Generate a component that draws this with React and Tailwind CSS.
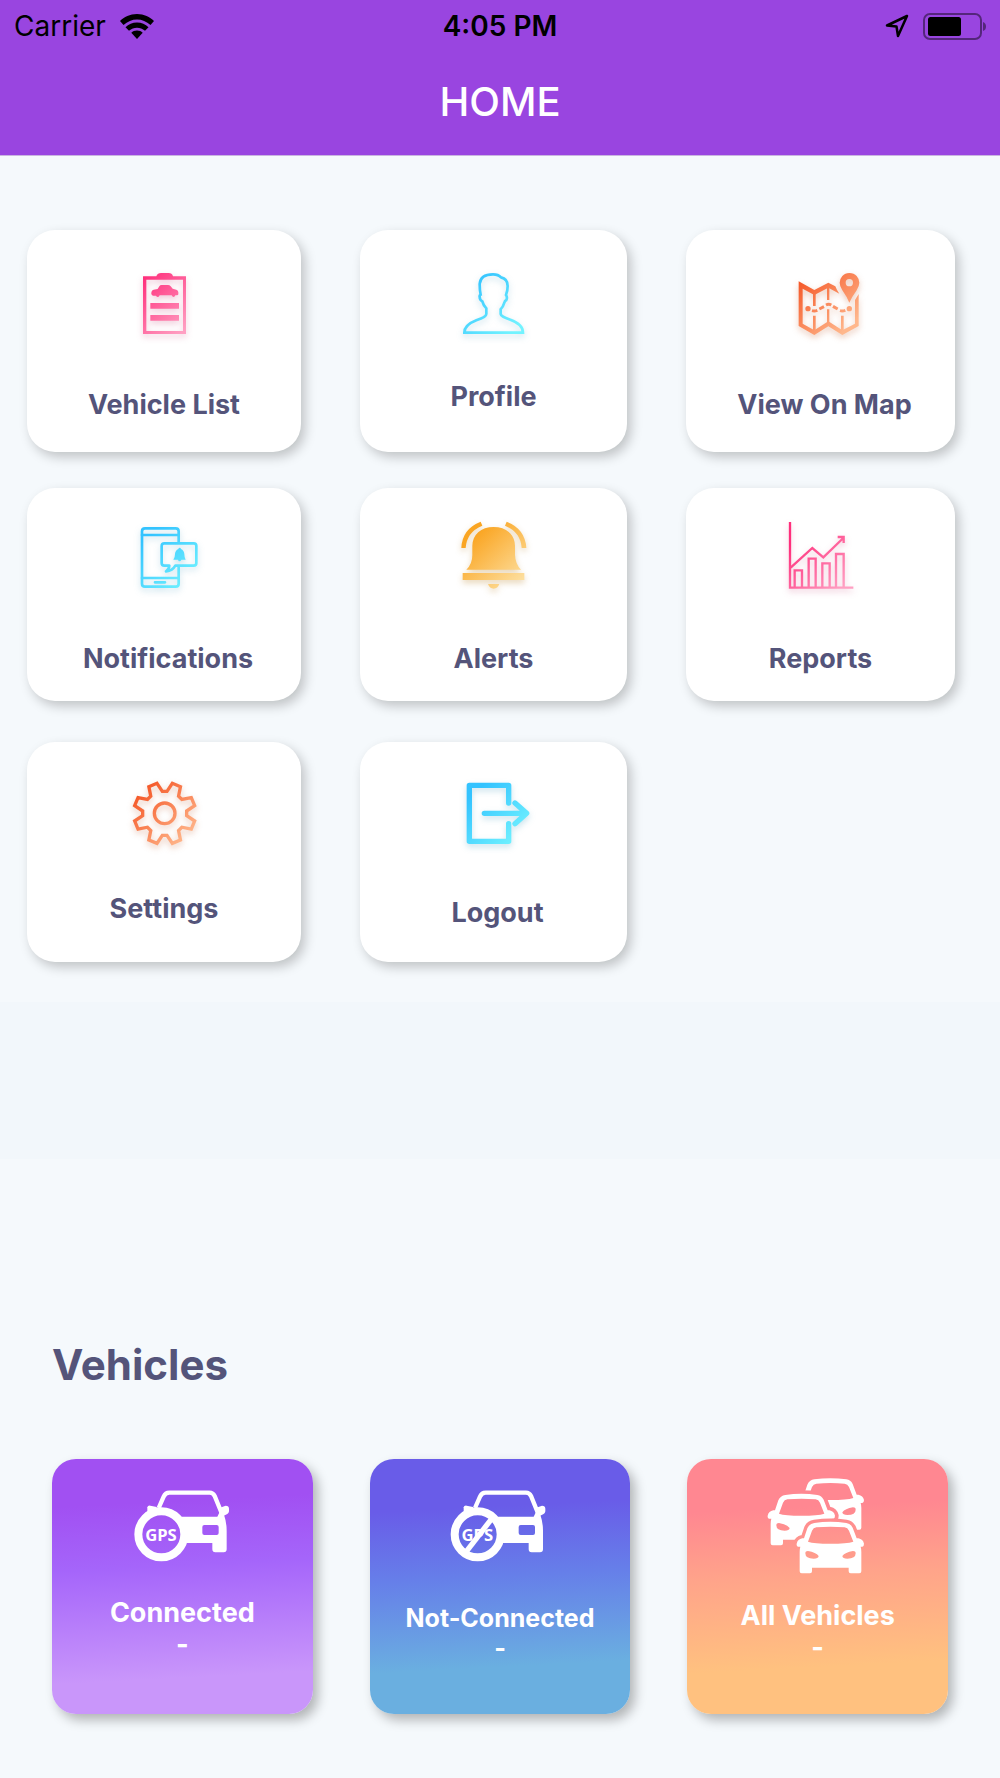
import React from "react";

const PALETTES = {
  pink: { from: "#ff2f7c", to: "#ff9fc2", shadow: "drop-shadow-[0_3px_3px_rgba(190,40,100,0.25)]" },
  cyan: { from: "#33c3ff", to: "#72f3ff", shadow: "drop-shadow-[0_3px_3px_rgba(40,140,180,0.25)]" },
  orange: { from: "#f55a2a", to: "#ffb78c", shadow: "drop-shadow-[0_3px_3px_rgba(190,80,30,0.3)]" },
  amber: { from: "#faa522", to: "#fddf9f", shadow: "drop-shadow-[0_3px_3px_rgba(180,120,20,0.3)]" },
};

function GradientIcon({ name, tone, x, y, children }) {
  const palette = PALETTES[tone];
  const id = `tone-${name}`;
  const paint = `url(#${id})`;
  return (
    <svg
      viewBox={`${x} ${y} 240 240`}
      className={`size-20 overflow-visible ${palette.shadow}`}
      aria-hidden="true"
    >
      <defs>
        <linearGradient id={id} gradientUnits="userSpaceOnUse" x1={x + 50} y1={y + 50} x2={x + 185} y2={y + 195}>
          <stop offset="0" stopColor={palette.from} />
          <stop offset="1" stopColor={palette.to} />
        </linearGradient>
      </defs>
      {children(paint)}
    </svg>
  );
}

function VehicleListIcon() {
  return (
    <GradientIcon name="list" tone="pink" x={312} y={132}>
      {(p) => (
        <g fill={p}>
          <path fillRule="evenodd" d="M369 169H409Q413 159 423 159H446Q456 159 459 169H498V342H369ZM379 179V333H489V179Z" />
          <path d="M394 222Q393 211 401 209L413 207L418 199Q420 195 425 195H444Q449 195 452 199L458 206L469 209Q475 211 475 217V223Q475 226 471 226H466Q464 231 461 231Q457 231 455 226H419Q417 231 414 231Q410 231 408 227H399Q395 226 394 222Z" />
          <path d="M391 249H477V266H391ZM391 285H477V302H391Z" />
        </g>
      )}
    </GradientIcon>
  );
}

function ProfileIcon() {
  return (
    <GradientIcon name="profile" tone="cyan" x={311} y={132}>
      {(p) => (
        <path
          fill="none"
          stroke={p}
          strokeWidth="8"
          d="M342 338C342 318 360 308 378 301Q408 291 408 282V265Q399 256 396 244Q388 240 388 230Q387 226 391 224Q388 210 388 192Q390 163 428 163Q444 163 452 172Q472 176 472 198Q472 212 467 225Q472 232 468 240Q463 243 462 248Q458 262 451 268V282Q452 290 480 299C505 308 518 320 518 338Z"
        />
      )}
    </GradientIcon>
  );
}

function MapIcon() {
  return (
    <GradientIcon name="map" tone="orange" x={343} y={132}>
      {(p) => (
        <g fill={p}>
          <path d="M384 184L431 210L473 188L494 199Q499 212 506 221L473 203L431 225L396 206V311L431 331L473 304L515 331L553 311V240L564 222V318L515 345L473 319L431 345L384 318Z" />
          <path d="M427 218H435V258H427ZM427 287H435V332H427ZM469 200H476V240H469ZM469 268H476V308H469ZM511 287H519V332H511Z" />
          <path
            fillRule="evenodd"
            d="M536 159Q550 159 558 168Q566 177 566 188Q566 197 558 211Q543 232 536 248Q529 231 515 211Q507 198 507 188Q507 177 515 168Q523 159 536 159ZM536 177A11 11 0 1 0 536 199A11 11 0 1 0 536 177Z"
          />
          <circle cx="412" cy="266" r="8" />
          <circle cx="536" cy="266" r="8" />
          <g fill="none" stroke={p} strokeWidth="9">
            <path d="M424 272Q432 274 440 271" />
            <path d="M446 267L460 260" />
            <path d="M466 255Q474 251 482 255" />
            <path d="M487 259L501 267" />
            <path d="M508 272Q516 274 524 271" />
          </g>
        </g>
      )}
    </GradientIcon>
  );
}

function NotificationsIcon() {
  return (
    <GradientIcon name="notifications" tone="cyan" x={324} y={126}>
      {(p) => (
        <g fill="none" stroke={p} strokeWidth="8" strokeLinejoin="round" strokeLinecap="round">
          <path d="M476 186V154Q476 145 467 145H375Q366 145 366 154V311Q366 320 375 320H467Q476 320 476 311V262" />
          <path d="M366 165H476M366 294H476M405 307H435" />
          <path d="M433 190H521Q529 190 529 198V249Q529 257 521 257H466Q458 272 438 274Q447 269 448 257H433Q425 257 425 249V198Q425 190 433 190Z" />
          <path
            stroke="none"
            fill={p}
            d="M479 203Q482 203 483 207Q492 211 493 222Q493 234 497 239H484Q482 244 479 244Q475 244 474 239H460Q465 234 465 222Q466 211 475 207Q476 203 479 203Z"
          />
        </g>
      )}
    </GradientIcon>
  );
}

function AlertsIcon() {
  return (
    <GradientIcon name="alerts" tone="amber" x={311} y={126}>
      {(p) => (
        <g fill={p}>
          <path d="M430 141C468 141 494 164 494 198V225Q495 252 512 269H348Q366 252 366 225V198C366 164 392 141 430 141Z" />
          <path d="M337 279H522V300H337ZM413 312H447Q442 326 430 326Q418 326 413 312Z" />
          <path d="M391 125L396 137Q349 156 346 204H333Q335 147 391 125ZM469 125L464 137Q511 156 514 204H528Q525 147 469 125Z" />
        </g>
      )}
    </GradientIcon>
  );
}

function ReportsIcon() {
  return (
    <GradientIcon name="reports" tone="pink" x={331} y={126}>
      {(p) => (
        <g fill="none" stroke={p} strokeWidth="7">
          <path d="M358 126V323H548" />
          <path d="M360 263L425 204L458 232L518 174M501 171H519V189" />
          <path d="M372 322V271H394V322M414 322V236H435V322M455 322V250H477V322M496 322V222H519V322" />
        </g>
      )}
    </GradientIcon>
  );
}

const GEAR_PATH =
  Array.from({ length: 8 }, (_, k) => {
    const a = (k * Math.PI) / 4;
    return [[-23, -90], [-7, -66], [7, -66], [23, -90]]
      .map(([px, py]) => {
        const gx = 434 + px * Math.cos(a) - py * Math.sin(a);
        const gy = 250 + px * Math.sin(a) + py * Math.cos(a);
        return `${gx.toFixed(1)} ${gy.toFixed(1)}`;
      })
      .join("L");
  })
    .map((part, i) => (i ? "L" : "M") + part)
    .join("") + "Z";

function SettingsIcon() {
  return (
    <GradientIcon name="settings" tone="orange" x={312} y={138}>
      {(p) => (
        <g fill="none" stroke={p} strokeWidth="10">
          <path d={GEAR_PATH} />
          <circle cx="434" cy="250" r="31" />
        </g>
      )}
    </GradientIcon>
  );
}

function LogoutIcon() {
  return (
    <GradientIcon name="logout" tone="cyan" x={323} y={138}>
      {(p) => (
        <g fill="none" stroke={p} strokeWidth="16" strokeLinecap="round" strokeLinejoin="round">
          <path d="M475 219V166H357V334H475V281" />
          <path d="M402 250H528M494 219L529 250L494 281" />
        </g>
      )}
    </GradientIcon>
  );
}

function GpsCar({ blocked }) {
  return (
    <svg viewBox={blocked ? "281 463 300 300" : "276 463 300 300"} className="size-[100px] overflow-visible" aria-hidden="true">
      <g fill="#fff">
        <path d="M356 562L371 528Q376 516 388 516H509Q519 516 524 526L546 580" fill="none" stroke="#fff" strokeWidth="13" />
        <path d="M322 560Q323 554 331 555L350 559V575L322 583Z" />
        <path d="M538 562L557 555Q567 555 567 564V572Q566 580 556 583L545 588Z" />
        <path
          fillRule="evenodd"
          d="M415 588H532L540 572L552 582Q560 605 560 630V686Q560 695 551 695H526Q517 695 517 686V667H440L425 640ZM493 613Q487 613 487 619V637Q487 643 493 643H530Q536 643 536 637V619Q536 613 530 613Z"
        />
        <circle cx="364" cy="641" r="69" fill="none" stroke="#fff" strokeWidth="24" />
        <text x="363" y="660" textAnchor="middle" fontSize="50" fontWeight="700" fontFamily="'Noto Sans', 'Open Sans', sans-serif">
          GPS
        </text>
        {blocked && <path d="M328 695L407 593" stroke="#fff" strokeWidth="16" />}
      </g>
    </svg>
  );
}

const CAR_OUTLINE =
  "M388 318H383Q378 317 379 309Q382 296 396 293H401L411 263Q417 249 432 247Q480 240 528 247Q541 249 547 261L559 293H564Q578 296 581 309Q581 317 576 318H571Q573 325 573 333V392Q573 398 567 398H541Q535 398 535 392V381H425V392Q425 398 419 398H394Q388 398 388 392V333Q388 325 390 318Z";
const CAR_CUTS =
  "M413 303L425 270Q429 261 438 260Q480 256 523 260Q532 261 536 270L549 303Q530 309 480 309Q431 309 413 303ZM405 338Q405 331 413 331Q437 335 445 346Q444 354 430 354Q405 354 405 338ZM556 338Q556 331 548 331Q524 335 516 346Q517 354 531 354Q556 354 556 338Z";

function CarGroup() {
  const car = CAR_OUTLINE + CAR_CUTS;
  return (
    <svg viewBox="293 103 300 300" className="size-[100px] overflow-visible" aria-hidden="true">
      <defs>
        <mask id="behind-front" maskUnits="userSpaceOnUse" x="270" y="90" width="340" height="330">
          <rect x="270" y="90" width="340" height="330" fill="#fff" />
          <path d={CAR_OUTLINE} fill="#000" stroke="#000" strokeWidth="20" />
        </mask>
        <mask id="behind-both" maskUnits="userSpaceOnUse" x="270" y="90" width="340" height="330">
          <rect x="270" y="90" width="340" height="330" fill="#fff" />
          <path d={CAR_OUTLINE} fill="#000" stroke="#000" strokeWidth="20" />
          <path d={CAR_OUTLINE} transform="translate(-87 -84)" fill="#000" stroke="#000" strokeWidth="22" />
        </mask>
      </defs>
      <g fill="#fff" fillRule="evenodd">
        <path d={car} />
        <g mask="url(#behind-front)">
          <path d={car} transform="translate(-87 -84)" />
        </g>
        <g mask="url(#behind-both)">
          <path d={car} transform="translate(0 -131)" />
        </g>
      </g>
    </svg>
  );
}

const ROWS = [
  {
    className: "",
    pad: "pb-[31px]",
    items: [
      { label: "Vehicle List", Icon: VehicleListIcon, gap: "mt-[45px]" },
      { label: "Profile", Icon: ProfileIcon, gap: "mt-[37px]" },
      { label: "View On Map", Icon: MapIcon, gap: "mt-[45px]", shift: "pl-2" },
    ],
  },
  {
    className: "mt-9",
    pad: "pb-[26px]",
    items: [
      { label: "Notifications", Icon: NotificationsIcon, gap: "mt-[41px]", shift: "pl-2" },
      { label: "Alerts", Icon: AlertsIcon, gap: "mt-[41px]" },
      { label: "Reports", Icon: ReportsIcon, gap: "mt-[41px]" },
    ],
  },
  {
    className: "mt-[41px]",
    pad: "pb-[33px]",
    items: [
      { label: "Settings", Icon: SettingsIcon, gap: "mt-[37px]" },
      { label: "Logout", Icon: LogoutIcon, gap: "mt-[41px]", shift: "pl-2" },
    ],
  },
];

const TILES = [
  {
    label: "Connected",
    icon: <GpsCar />,
    text: "mt-[22px] text-[27px] leading-8",
    bg: "bg-[linear-gradient(177deg,#a150f2_18%,#a565fa_42%,#c996fa_84%)]",
  },
  {
    label: "Not-Connected",
    icon: <GpsCar blocked />,
    text: "mt-7 text-[25px] leading-[30px]",
    bg: "bg-[linear-gradient(177deg,#695ce8_20%,#667fe9_46%,#6aafe0_80%)]",
  },
  {
    label: "All Vehicles",
    icon: <CarGroup />,
    text: "mt-[25px] text-[27px] leading-8",
    bg: "bg-[linear-gradient(177deg,#ff8791_20%,#ffa48a_46%,#ffc17f_80%)]",
  },
];

function StatusBar() {
  return (
    <div className="grid grid-cols-3 items-center px-3.5 pt-2 text-black">
      <div className="flex items-center gap-3.5">
        <span className="text-[28px] leading-9">Carrier</span>
        <svg viewBox="0 0 34 25" className="h-[25px] w-[34px]" aria-label="Wi-Fi">
          <path d="M17 0C24 0 30 3 34 7L30.500 11C26.500 7.500 22 5.500 17 5.500S7.500 7.500 3.500 11L0 7C4 3 10 0 17 0Z" />
          <path d="M17 8.500C21.500 8.500 25.500 10.300 28.500 13.200L25 16.800C22.500 14.800 20 13.800 17 13.800S11.500 14.800 9 16.800L5.500 13.200C8.500 10.300 12.500 8.500 17 8.500Z" />
          <path d="M17 16.500C19.300 16.500 21.300 17.400 22.700 18.800L17 25L11.300 18.800C12.700 17.400 14.700 16.500 17 16.500Z" />
        </svg>
      </div>
      <div className="text-center text-[28px] leading-9 font-semibold">4:05 PM</div>
      <div className="flex items-center justify-end gap-3.5">
        <svg viewBox="0 0 24 24" className="size-6" fill="none" stroke="currentColor" strokeWidth="2.500" strokeLinejoin="round" aria-label="Location">
          <path d="M22 2L2 11.500L11.500 12.500L13 22Z" />
        </svg>
        <svg viewBox="0 0 63 27" className="h-[27px] w-[63px]" aria-label="Battery">
          <rect x="1" y="1" width="57" height="25" rx="6" fill="none" stroke="#000" strokeOpacity="0.45" strokeWidth="2" />
          <rect x="5" y="4" width="33" height="19" rx="2.500" />
          <path d="M60 9Q63 10 63 13.500T60 18Z" fillOpacity="0.45" />
        </svg>
      </div>
    </div>
  );
}

export default function App() {
  return (
    <div className="min-h-screen bg-[#f5f9fc] font-['Inter','Liberation_Sans',sans-serif] text-[#54547a]">
      <header className="border-b border-[#c9b5e0] bg-[#9945e0] pb-[29px]">
        <StatusBar />
        <h1 className="mt-[34px] text-center text-[40px] leading-[48px] font-medium text-white">HOME</h1>
      </header>

      <main>
        <nav aria-label="Main menu" className="pt-[74px] pr-[45px] pb-10 pl-[27px]">
          {ROWS.map((row, i) => (
            <div key={i} className={`grid grid-cols-[274fr_267fr_269fr] gap-x-[59px] ${row.className}`}>
              {row.items.map(({ label, Icon, gap, shift = "" }) => (
                <button
                  key={label}
                  type="button"
                  className={`flex flex-col items-center rounded-[28px] bg-white pt-[34px] shadow-[4px_5px_12px_rgba(0,0,0,0.22)] ${row.pad} ${shift}`}
                >
                  <Icon />
                  <span className={`text-[27px] leading-8 font-bold ${gap}`}>{label}</span>
                </button>
              ))}
            </div>
          ))}
        </nav>

        <div className="h-[157px] bg-[#f2f7fb]" />

        <section className="px-13 pt-[180px] pb-16">
          <h2 className="text-[42px] leading-[52px] font-bold">Vehicles</h2>
          <div className="mt-[68px] grid grid-cols-3 gap-x-[57px]">
            {TILES.map((tile) => (
              <button
                key={tile.label}
                type="button"
                className={`flex flex-col items-center rounded-3xl pt-4 pb-[50px] text-white shadow-[5px_6px_12px_rgba(0,0,0,0.28)] ${tile.bg}`}
              >
                {tile.icon}
                <span className={`font-bold ${tile.text}`}>
                  {tile.label}
                  <br />-
                </span>
              </button>
            ))}
          </div>
        </section>
      </main>
    </div>
  );
}
